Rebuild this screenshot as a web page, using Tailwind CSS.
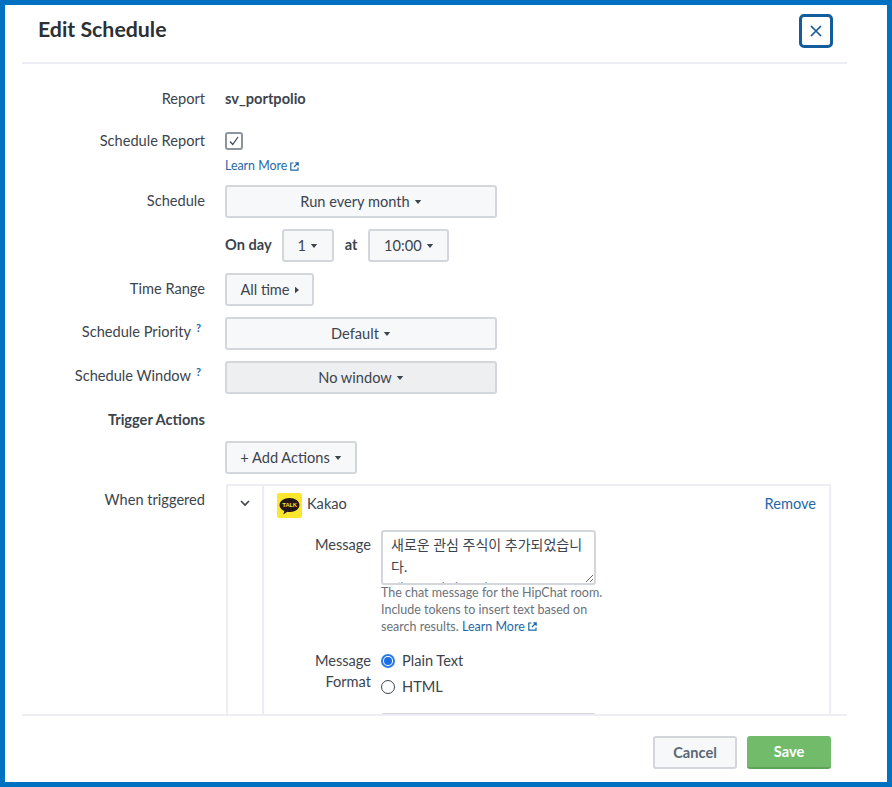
<!DOCTYPE html>
<html lang="en">

<head>
    <meta charset="UTF-8" />
    <meta name="viewport" content="width=device-width, initial-scale=1.0" />
    <title>Edit Schedule</title>
    <script src="https://cdn.jsdelivr.net/npm/@tailwindcss/browser@4"></script>
</head>

<body class="bg-white">
    <div class="w-[892px] h-[787px] border-[5px] border-[#0070c0] bg-white flex flex-col overflow-hidden font-['Lato','Noto_Sans_CJK_KR',sans-serif] text-[14.6px] text-[#3c444d]">

        <!-- Header -->
        <div class="h-[59px] shrink-0 ml-[17px] mr-[40px] pl-[16px] pr-[14px] border-b-2 border-[#eceef3] flex items-center justify-between">
            <h1 class="text-[21.3px] font-bold text-[#2b3033] leading-none -mt-[8px]">Edit Schedule</h1>
            <button class="w-[34px] h-[34px] -mt-[5px] border-[3px] border-[#135d9d] rounded-[5px] flex items-center justify-center">
                <svg width="12" height="12" viewBox="0 0 12 12" fill="none" stroke="#135d9d" stroke-width="1.7"><path d="M1 1l10 10M11 1L1 11" /></svg>
            </button>
        </div>

        <!-- Form -->
        <div class="flex-1 min-h-0 overflow-hidden ml-[17px] mr-[40px] pt-[25px]">
            <div class="flex items-center h-[20px]">
                <div class="w-[183px] text-right">Report</div>
                <div class="ml-[20px] font-bold">sv_portpolio</div>
            </div>

            <div class="flex mt-[22px]">
                <div class="w-[183px] text-right leading-[20px]">Schedule Report</div>
                <div class="ml-[20px]">
                    <div class="w-[18px] h-[18px] mt-[1px] border-2 border-[#8d949c] rounded-[3px] flex items-center justify-center">
                        <svg width="12" height="12" viewBox="0 0 12 12" fill="none" stroke="#3c444d" stroke-width="1.2"><path d="M2 6.500l2.700 3L10 2" /></svg>
                    </div>
                    <a class="mt-[8px] h-[16px] flex items-center gap-[3px] text-[12.4px] text-[#1f68a8]">Learn More
                        <svg width="9" height="9" viewBox="0 0 9 9" fill="none" stroke="#1f68a8" stroke-width="1.2"><path d="M3.500 1H.8v7.200H8V5.500M4 5l4-4M5.300.8h2.900v2.900" /></svg>
                    </a>
                </div>
            </div>

            <div class="flex mt-[11px]">
                <div class="w-[183px] text-right leading-[32px]">Schedule</div>
                <button class="ml-[20px] w-[272px] h-[33px] bg-[#f7f8fa] border-2 border-[#d3d7dc] rounded-[3px] flex items-center justify-center gap-[4px]">Run every month
                    <svg width="8" height="4" viewBox="0 0 8 5" fill="#3c444d"><path d="M0 0h8L4 5z" /></svg>
                </button>
            </div>

            <div class="flex items-center mt-[11px] ml-[203px]">
                <span class="font-bold mr-[10px] -mt-[1px]">On day</span>
                <button class="w-[52px] h-[33px] bg-[#f7f8fa] border-2 border-[#d3d7dc] rounded-[3px] flex items-center justify-center gap-[4px]">1
                    <svg width="8" height="4" viewBox="0 0 8 5" fill="#3c444d"><path d="M0 0h8L4 5z" /></svg>
                </button>
                <span class="font-bold mx-[11px] -mt-[1px]">at</span>
                <button class="w-[81px] h-[33px] bg-[#f7f8fa] border-2 border-[#d3d7dc] rounded-[3px] flex items-center justify-center gap-[4px]">10:00
                    <svg width="8" height="4" viewBox="0 0 8 5" fill="#3c444d"><path d="M0 0h8L4 5z" /></svg>
                </button>
            </div>

            <div class="flex mt-[11px]">
                <div class="w-[183px] text-right leading-[32px]">Time Range</div>
                <button class="ml-[20px] w-[89px] h-[33px] bg-[#f7f8fa] border-2 border-[#d3d7dc] rounded-[3px] flex items-center justify-center gap-[5px]">All time
                    <svg width="4" height="8" viewBox="0 0 5 8" fill="#3c444d"><path d="M0 0l5 4-5 4z" /></svg>
                </button>
            </div>

            <div class="flex mt-[11px]">
                <div class="w-[183px] text-right pr-[14px] leading-[30px] relative">Schedule Priority<span class="absolute right-[4px] top-[-4px] text-[11px] font-bold text-[#1f68a8]">?</span></div>
                <button class="ml-[20px] w-[272px] h-[33px] bg-[#f7f8fa] border-2 border-[#d3d7dc] rounded-[3px] flex items-center justify-center gap-[4px]">Default
                    <svg width="8" height="4" viewBox="0 0 8 5" fill="#3c444d"><path d="M0 0h8L4 5z" /></svg>
                </button>
            </div>

            <div class="flex mt-[11px]">
                <div class="w-[183px] text-right pr-[14px] leading-[30px] relative">Schedule Window<span class="absolute right-[4px] top-[-4px] text-[11px] font-bold text-[#1f68a8]">?</span></div>
                <button class="ml-[20px] w-[272px] h-[33px] bg-[#eeeff1] border-2 border-[#d3d7dc] rounded-[3px] flex items-center justify-center gap-[4px]">No window
                    <svg width="8" height="4" viewBox="0 0 8 5" fill="#3c444d"><path d="M0 0h8L4 5z" /></svg>
                </button>
            </div>

            <div class="w-[183px] text-right font-bold mt-[16px] h-[20px] leading-[20px]">Trigger Actions</div>

            <button class="ml-[203px] mt-[11px] w-[132px] h-[33px] bg-[#f7f8fa] border-2 border-[#d3d7dc] rounded-[3px] flex items-center justify-center gap-[4px]">+ Add Actions
                <svg width="8" height="4" viewBox="0 0 8 5" fill="#3c444d"><path d="M0 0h8L4 5z" /></svg>
            </button>

            <div class="flex mt-[10px]">
                <div class="w-[183px] text-right leading-[32px]">When triggered</div>
                <div class="ml-[21px] w-[605px] h-[300px] border-2 border-[#eceef3] flex">
                    <div class="w-[36px] shrink-0 border-r-2 border-[#eceef3] flex justify-center pt-[14px]">
                        <svg width="10" height="7" viewBox="0 0 10 7" fill="none" stroke="#3c444d" stroke-width="1.6"><path d="M1 1l4 4 4-4" /></svg>
                    </div>
                    <div class="flex-1 min-w-0">
                        <div class="flex items-center h-[32px] mt-[3px] pl-[13px] pr-[13px]">
                            <svg width="25" height="25" viewBox="0 0 25 25" class="shrink-0 rounded-[2px]">
                                <rect width="25" height="25" fill="#fde72e" />
                                <path d="M12.500 5C7 5 2.500 8 2.500 12c0 2.600 2 4.800 4.800 6l-1 3.500 4-2.700c.7.100 1.400.200 2.200.200 5.500 0 10-3 10-7s-4.500-7-10-7z" fill="#231815" />
                                <text x="12.500" y="14" text-anchor="middle" font-size="6" font-weight="700" fill="#fde72e" font-family="Lato">TALK</text>
                            </svg>
                            <span class="ml-[5px] flex-1 -mt-[2px]">Kakao</span>
                            <a class="text-[#1f68a8] -mt-[2px]">Remove</a>
                        </div>

                        <div class="flex mt-[9px]">
                            <div class="w-[107px] text-right leading-[30px]">Message</div>
                            <div class="ml-[10px] w-[226px]">
                                <textarea class="block w-[215px] h-[55px] border-2 border-[#d3d7dc] rounded-[3px] px-[8px] pt-[2px] text-[14px] leading-[22px] text-[#3c444d] outline-none">새로운 관심 주식이 추가되었습니다.
새로운 관심 주식</textarea>
                                <p class="text-[12.5px] leading-[17px] text-[#6b7279] -mt-[1px]">The chat message for the HipChat room. Include tokens to insert text based on search results. <a class="text-[#1f68a8]">Learn More <svg class="inline-block align-baseline" width="9" height="9" viewBox="0 0 9 9" fill="none" stroke="#1f68a8" stroke-width="1.2"><path d="M3.500 1H.8v7.200H8V5.500M4 5l4-4M5.300.8h2.900v2.900" /></svg></a></p>
                            </div>
                        </div>

                        <div class="flex mt-[13px]">
                            <div class="w-[107px] pl-[30px] pt-[2px] text-right leading-[21px]">Message Format</div>
                            <div class="ml-[10px]">
                                <div class="flex items-center h-[26px] gap-[7px]">
                                    <span class="w-[14px] h-[14px] rounded-full border-2 border-[#2f7be5] flex items-center justify-center"><span class="w-[8px] h-[8px] rounded-full bg-[#1a6fe8]"></span></span>
                                    Plain Text
                                </div>
                                <div class="flex items-center h-[26px] gap-[7px]">
                                    <span class="w-[14px] h-[14px] rounded-full border-[1.5px] border-[#3c444d]"></span>
                                    HTML
                                </div>
                            </div>
                        </div>

                        <div class="ml-[117px] mt-[13px] w-[215px] h-[30px] border-2 border-[#d3d7dc] rounded-[3px]"></div>
                    </div>
                </div>
            </div>
        </div>

        <!-- Footer -->
        <div class="h-[68px] shrink-0 ml-[17px] mr-[40px] border-t-2 border-[#eceef3] flex justify-end gap-[10px] pt-[20px]">
            <button class="w-[84px] h-[33px] bg-[#f7f8fa] border-2 border-[#d3d7dc] rounded-[3px] font-bold text-[#5c6773]">Cancel</button>
            <button class="w-[84px] h-[33px] mr-[16px] bg-[#72bb6a] border-b-2 border-[#5ea356] rounded-[3px] font-bold text-white">Save</button>
        </div>
    </div>
</body>

</html>
